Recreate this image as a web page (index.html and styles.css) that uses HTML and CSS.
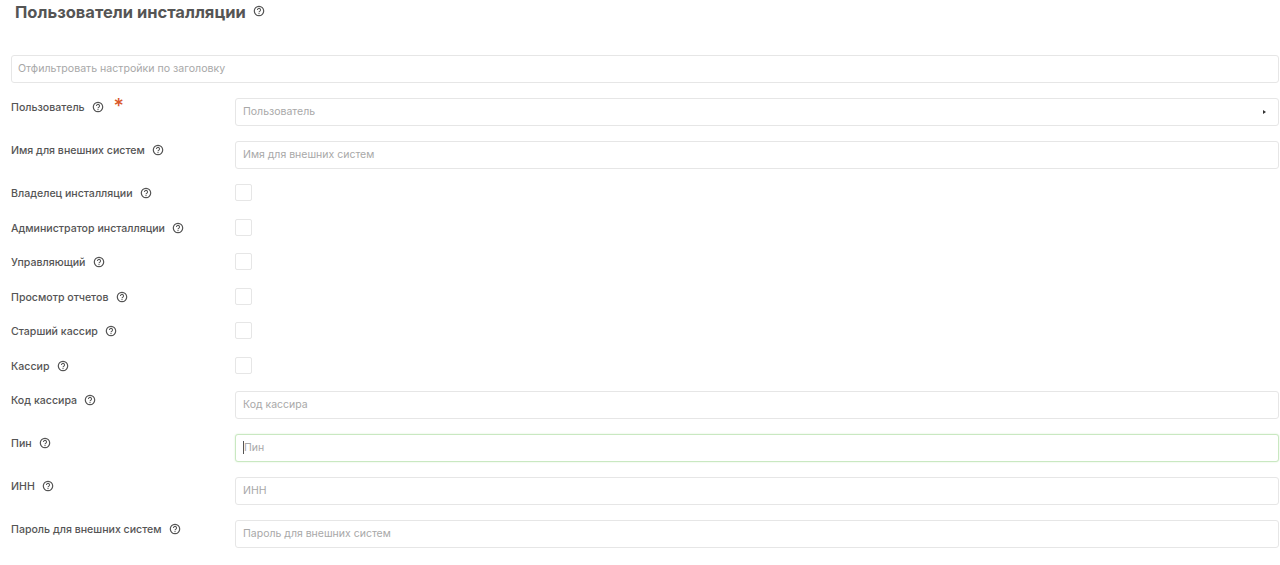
FILE: index.html
```html
<!DOCTYPE html>
<html>
  <head>
    <meta charset="utf-8">
    <link rel="stylesheet" href="styles.css">
  </head>
  <body>
    <svg class="sprite" width="0" height="0">
      <symbol id="help" viewBox="0 0 12 12">
        <circle cx="6" cy="6" r="4.7" fill="none" stroke="currentColor" stroke-width="1.2"/>
        <path d="M4.5 4.9a1.5 1.5 0 1 1 2.4 1.2c-.6.4-.9.6-.9 1.2" fill="none" stroke="currentColor" stroke-width="1.1"/>
        <circle cx="6" cy="8.6" r=".7" fill="currentColor"/>
      </symbol>
    </svg>

    <h1 class="title">Пользователи инсталляции <svg class="help help-title"><use href="#help"/></svg></h1>

    <input class="field filter" placeholder="Отфильтровать настройки по заголовку">

    <div class="row">
      <label>Пользователь <svg class="help"><use href="#help"/></svg><span class="required">*</span></label>
      <div class="select">
        <span>Пользователь</span>
        <span class="arrow"></span>
      </div>
    </div>
    <div class="row">
      <label>Имя для внешних систем <svg class="help"><use href="#help"/></svg></label>
      <input class="field" placeholder="Имя для внешних систем">
    </div>
    <div class="row row-check">
      <label>Владелец инсталляции <svg class="help"><use href="#help"/></svg></label>
      <span class="check"></span>
    </div>
    <div class="row row-check">
      <label>Администратор инсталляции <svg class="help"><use href="#help"/></svg></label>
      <span class="check"></span>
    </div>
    <div class="row row-check">
      <label>Управляющий <svg class="help"><use href="#help"/></svg></label>
      <span class="check"></span>
    </div>
    <div class="row row-check">
      <label>Просмотр отчетов <svg class="help"><use href="#help"/></svg></label>
      <span class="check"></span>
    </div>
    <div class="row row-check">
      <label>Старший кассир <svg class="help"><use href="#help"/></svg></label>
      <span class="check"></span>
    </div>
    <div class="row row-check">
      <label>Кассир <svg class="help"><use href="#help"/></svg></label>
      <span class="check"></span>
    </div>
    <div class="row">
      <label>Код кассира <svg class="help"><use href="#help"/></svg></label>
      <input class="field" placeholder="Код кассира">
    </div>
    <div class="row">
      <label>Пин <svg class="help"><use href="#help"/></svg></label>
      <div class="field focused"><span class="caret"></span>Пин</div>
    </div>
    <div class="row">
      <label>ИНН <svg class="help"><use href="#help"/></svg></label>
      <input class="field" placeholder="ИНН">
    </div>
    <div class="row">
      <label>Пароль для внешних систем <svg class="help"><use href="#help"/></svg></label>
      <input class="field" placeholder="Пароль для внешних систем">
    </div>
  </body>
</html>
```

FILE: styles.css
```css
body {
  margin: 0;
  padding: 0 1px 0 11px;
  background: #fff;
  font-family: "Inter", "Open Sans", sans-serif;
  color: #555;
}

.sprite {
  display: block;
}

.title {
  margin: 0 0 32px 4px;
  height: 23px;
  line-height: 25px;
  font-size: 16.5px;
  font-weight: 700;
  color: #555;
}

.help {
  display: inline-block;
  width: 12px;
  height: 12px;
  margin-left: 4.5px;
  vertical-align: -2px;
  color: #555;
}

.help-title {
  margin-left: 3px;
  vertical-align: 1px;
}

.field,
.select {
  display: flex;
  align-items: center;
  box-sizing: border-box;
  flex: 1;
  width: 100%;
  height: 28px;
  padding: 0 7px 1px;
  border: 1px solid #e6e6e6;
  border-radius: 3px;
  background: #fff;
  font-family: inherit;
  font-size: 10.5px;
  color: #a8a8a8;
  outline: none;
}

.field::placeholder {
  color: #a8a8a8;
  opacity: 1;
}

.filter {
  margin-bottom: 15px;
  padding-left: 6px;
  font-size: 10.6px;
}

.row {
  display: flex;
  align-items: flex-start;
  margin-bottom: 15px;
  min-height: 28px;
}

.row-check {
  min-height: 18.5px;
  height: 18.5px;
  margin-bottom: 16px;
}

.row label {
  flex: 0 0 224px;
  line-height: 19px;
  font-size: 10.6px;
  font-weight: 500;
  color: #555;
}

.required {
  margin-left: 9.5px;
  font-size: 20px;
  line-height: 12px;
  vertical-align: -2px;
  color: #d9582b;
}

.select {
  justify-content: space-between;
}

.arrow {
  margin-right: 5px;
  border-left: 3px solid #333;
  border-top: 2.5px solid transparent;
  border-bottom: 2.5px solid transparent;
}

.check {
  box-sizing: border-box;
  width: 17px;
  height: 17px;
  border: 1px solid #e6e6e6;
  border-radius: 2px;
}

.focused {
  border-color: #c9e8c1;
  box-shadow: 0 0 2px #d8f0d2;
}

.caret {
  width: 1px;
  height: 13px;
  background: #555;
}
```
